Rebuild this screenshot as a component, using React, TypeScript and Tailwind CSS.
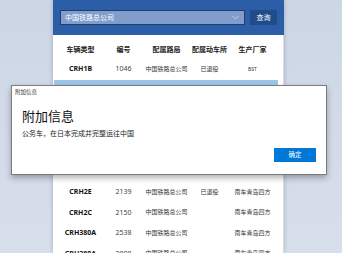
import React from "react";

const font = { fontFamily: '"Noto Sans", "Noto Sans CJK SC", sans-serif' };

type Row = { type: string; no: string; bureau: string; depot: string; maker: string };

const rows: Row[] = [
  { type: "CRH1B", no: "1046", bureau: "中国铁路总公司", depot: "已退役", maker: "BST" },
  { type: "CRH1A", no: "1061", bureau: "中国铁路总公司", depot: "", maker: "BST" },
  { type: "CRH2A", no: "2010", bureau: "中国铁路总公司", depot: "", maker: "南车青岛四方" },
  { type: "CRH2A", no: "2011", bureau: "中国铁路总公司", depot: "", maker: "南车青岛四方" },
  { type: "CRH2B", no: "2111", bureau: "中国铁路总公司", depot: "", maker: "南车青岛四方" },
  { type: "CRH2C", no: "2061", bureau: "中国铁路总公司", depot: "", maker: "南车青岛四方" },
  { type: "CRH2E", no: "2139", bureau: "中国铁路总公司", depot: "已退役", maker: "南车青岛四方" },
  { type: "CRH2C", no: "2150", bureau: "中国铁路总公司", depot: "", maker: "南车青岛四方" },
  { type: "CRH380A", no: "2538", bureau: "中国铁路总公司", depot: "", maker: "南车青岛四方" },
  { type: "CRH380A", no: "2808", bureau: "中国铁路总公司", depot: "", maker: "南车青岛四方" },
];

export default function App() {
  return (
    <div
      className="relative w-[342px] h-[253px] overflow-hidden bg-gradient-to-b from-[#cdd6e4] to-[#d7dfec]"
      style={font}
    >
      {/* main panel */}
      <div className="ml-[53px] w-[231px] h-full overflow-hidden bg-white shadow-[0_0_4px_rgba(60,80,110,0.35)] flex flex-col">
        <div className="shrink-0 h-[35px] bg-[#2c5ea7] flex items-center pl-[7px] gap-[5px]">
          <div className="w-[185px] h-[15px] bg-[#819dcc] border border-[#1f3d6f] flex items-center justify-between pl-[4px] pr-[5px]">
            <span className="text-[7px] leading-none text-white">中国铁路总公司</span>
            <svg width="7" height="5" viewBox="0 0 7 5">
              <path d="M0.5 1 L3.5 4 L6.5 1" fill="none" stroke="#c9d6ec" strokeWidth="0.8" />
            </svg>
          </div>
          <div className="w-[27px] h-[15px] bg-[#224b8b] flex items-center justify-center">
            <span className="text-[7px] leading-none text-white">查询</span>
          </div>
        </div>

        <div className="flex flex-1 min-h-0">
          <div className="w-[225px] pl-[1px] shrink-0">
            <div className="mt-[6px] h-[18px] grid grid-cols-5 items-center pl-[5px] pr-[4px] text-[7px] font-bold text-[#222] text-center">
              <span>车辆类型</span>
              <span>编号</span>
              <span>配属路局</span>
              <span>配属动车所</span>
              <span>生产厂家</span>
            </div>
            {rows.map((r, i) => (
              <div
                key={i}
                className={
                  "h-[20.5px] grid grid-cols-5 items-center pl-[5px] pr-[4px] text-center text-[#333] " +
                  (i === 1 ? "bg-[#9cc6ea]" : "")
                }
              >
                <span className="text-[7px] font-bold text-[#111]">{r.type}</span>
                <span className="text-[7px] text-[#444]">{r.no}</span>
                <span className="text-[6px]">{r.bureau}</span>
                <span className="text-[6px]">{r.depot}</span>
                <span className={r.maker === "BST" ? "text-[5px]" : "text-[6px]"}>{r.maker}</span>
              </div>
            ))}
          </div>
          <div className="flex-1" />
          <div className="w-[1px] bg-[#dcdcdc]" />
        </div>
      </div>

      {/* dialog */}
      <div className="absolute left-[11px] top-[85px] w-[316px] h-[90px] bg-white border border-[#7c7c7c] shadow-[0_3px_6px_rgba(0,0,0,0.3)] flex flex-col">
        <div className="h-[13px] pl-[3px] flex items-center text-[5.5px] leading-none text-[#333]">附加信息</div>
        <div className="px-[10px] flex flex-col">
          <div className="mt-[9px] h-[16px] flex items-center text-[13px] leading-none text-[#111]">附加信息</div>
          <div className="mt-[4px] h-[10px] flex items-center text-[7px] leading-none text-[#222]">
            公务车，在日本完成并完整运往中国
          </div>
          <div className="mt-[10px] self-end w-[42px] h-[14px] bg-[#0078d7] flex items-center justify-center">
            <span className="text-[6.5px] leading-none text-white">确定</span>
          </div>
        </div>
      </div>
    </div>
  );
}
